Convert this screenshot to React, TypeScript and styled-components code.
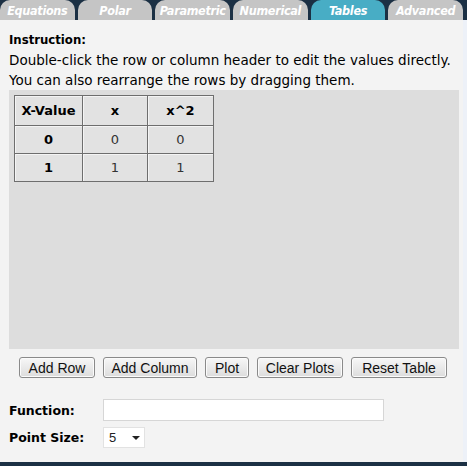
import React from "react";
import styled, { createGlobalStyle } from "styled-components";

const Global = createGlobalStyle`
  html, body { margin: 0; padding: 0; background: #1b3044; }
  body { width: 467px; height: 466px; overflow: hidden; }
`;

const Frame = styled.div`
  width: 467px;
  height: 466px;
  background: #1b3044;
  display: flex;
  flex-direction: column;
  font-family: "DejaVu Sans", Verdana, sans-serif;
`;

const TabBar = styled.div`
  display: flex;
  gap: 3px;
  height: 20px;
  padding-right: 4px;
`;

const Tab = styled.div<{ $active?: boolean }>`
  flex: 1;
  min-width: 0;
  height: 20px;
  border-radius: 10px 10px 0 0;
  background: ${(p) => (p.$active ? "#48adc5" : "#c5c5c5")};
  color: #fff;
  font-style: italic;
  font-weight: bold;
  font-size: 12.5px;
  letter-spacing: -0.3px;
  font-family: "DejaVu Sans Condensed", "DejaVu Sans", sans-serif;
  display: flex;
  align-items: center;
  justify-content: center;
  padding-top: 1px;
  box-sizing: border-box;
  white-space: nowrap;
`;

const Content = styled.div`
  height: 442px;
  background: #f3f3f3;
  border-right: 4px solid #edf1f8;
  padding: 10px 4px 0 9px;
  box-sizing: border-box;
  display: flex;
  flex-direction: column;
`;

const Heading = styled.div`
  font-size: 13px;
  font-weight: bold;
  color: #000;
  line-height: 20px;
  font-family: "DejaVu Sans Condensed", "DejaVu Sans", sans-serif;
`;

const Text = styled.div`
  font-size: 13.5px;
  color: #000;
  line-height: 20px;
  font-family: "DejaVu Sans", Verdana, sans-serif;
  white-space: nowrap;
`;

const Panel = styled.div`
  width: 450px;
  height: 259px;
  background: #dddddd;
  padding: 5px;
  box-sizing: border-box;
`;

const Table = styled.table`
  border-collapse: collapse;
  font-family: "DejaVu Sans", Verdana, sans-serif;
  font-size: 13px;
  color: #000;
`;

const Cell = styled.td<{ $head?: boolean; $w: number; $h: number }>`
  width: ${(p) => p.$w}px;
  height: ${(p) => p.$h}px;
  box-sizing: border-box;
  padding: 0;
  text-align: center;
  background: #e2e2e2;
  border: 1px solid #6e6e6e;
  box-shadow: inset 1px 1px 0 #f4f4f4;
  font-weight: ${(p) => (p.$head ? "bold" : "normal")};
  color: ${(p) => (p.$head ? "#000" : "#333")};
`;

const Buttons = styled.div`
  display: flex;
  gap: 8px;
  padding-left: 10px;
  margin-top: 8px;
`;

const Button = styled.button<{ $w: number }>`
  width: ${(p) => p.$w}px;
  height: 21px;
  padding: 0;
  border: 1px solid #8a8a8a;
  border-radius: 3px;
  background: linear-gradient(#f7f7f7, #dcdcdc);
  font-family: "Liberation Sans", Arial, sans-serif;
  font-size: 14px;
  color: #111;
  box-shadow: inset 0 0 0 1px #fbfbfb;
  white-space: nowrap;
`;

const FormRow = styled.div<{ $mt: number }>`
  display: flex;
  align-items: center;
  margin-top: ${(p) => p.$mt}px;
`;

const Label = styled.div`
  width: 94px;
  font-size: 12.5px;
  font-weight: bold;
  color: #000;
  font-family: "DejaVu Sans", Verdana, sans-serif;
`;

const Input = styled.input`
  width: 281px;
  height: 22px;
  box-sizing: border-box;
  border: 1px solid #d6d6d6;
  background: #fff;
  margin: 0;
`;

const Select = styled.div`
  width: 42px;
  height: 21px;
  box-sizing: border-box;
  border: 1px solid #e2e2e2;
  background: #fff;
  display: flex;
  align-items: center;
  justify-content: space-between;
  padding: 0 4px 0 5px;
  font-family: "Liberation Sans", Arial, sans-serif;
  font-size: 13px;
  color: #222;
`;

const Arrow = styled.span`
  width: 0;
  height: 0;
  border-left: 4px solid transparent;
  border-right: 4px solid transparent;
  border-top: 4px solid #222;
`;

const tabs = ["Equations", "Polar", "Parametric", "Numerical", "Tables", "Advanced"];
const widths = [68, 65, 66];
const buttons: [string, number][] = [
  ["Add Row", 76],
  ["Add Column", 94],
  ["Plot", 44],
  ["Clear Plots", 86],
  ["Reset Table", 96],
];

export default function App() {
  return (
    <>
      <Global />
      <Frame>
        <TabBar>
          {tabs.map((t) => (
            <Tab key={t} $active={t === "Tables"}>
              {t}
            </Tab>
          ))}
        </TabBar>
        <Content>
          <Heading>Instruction:</Heading>
          <Text>Double-click the row or column header to edit the values directly.</Text>
          <Text>You can also rearrange the rows by dragging them.</Text>
          <Panel>
            <Table>
              <tbody>
                <tr>
                  {["X-Value", "x", "x^2"].map((h, i) => (
                    <Cell key={h} $head $w={widths[i]} $h={30}>
                      {h}
                    </Cell>
                  ))}
                </tr>
                {[0, 1].map((r) => (
                  <tr key={r}>
                    <Cell $head $w={widths[0]} $h={28}>
                      {r}
                    </Cell>
                    <Cell $w={widths[1]} $h={28}>
                      {r}
                    </Cell>
                    <Cell $w={widths[2]} $h={28}>
                      {r}
                    </Cell>
                  </tr>
                ))}
              </tbody>
            </Table>
          </Panel>
          <Buttons>
            {buttons.map(([label, w]) => (
              <Button key={label} $w={w}>
                {label}
              </Button>
            ))}
          </Buttons>
          <FormRow $mt={21}>
            <Label>Function:</Label>
            <Input />
          </FormRow>
          <FormRow $mt={6}>
            <Label>Point Size:</Label>
            <Select>
              5<Arrow />
            </Select>
          </FormRow>
        </Content>
      </Frame>
    </>
  );
}
